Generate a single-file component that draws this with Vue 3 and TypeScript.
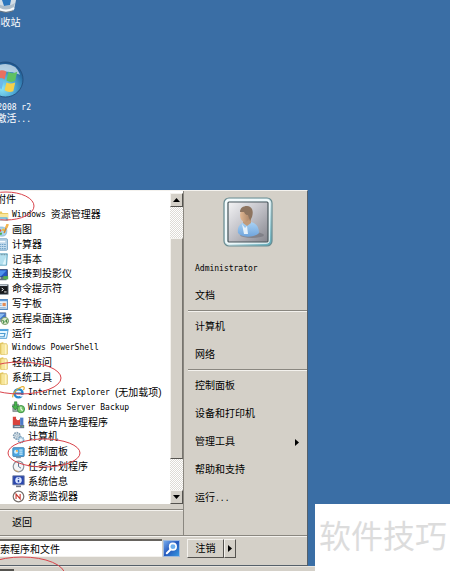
<script setup lang="ts">
interface ProgramItem {
  icon?: string
  latin?: string
  text?: string
  level: number
}

const programs: ProgramItem[] = [
  { text: '附件', level: 0 },
  { icon: 'explorer', latin: 'Windows', text: '资源管理器', level: 1 },
  { icon: 'paint', text: '画图', level: 1 },
  { icon: 'calc', text: '计算器', level: 1 },
  { icon: 'notepad', text: '记事本', level: 1 },
  { icon: 'projector', text: '连接到投影仪', level: 1 },
  { icon: 'cmd', text: '命令提示符', level: 1 },
  { icon: 'wordpad', text: '写字板', level: 1 },
  { icon: 'remote', text: '远程桌面连接', level: 1 },
  { icon: 'run', text: '运行', level: 1 },
  { icon: 'folder', latin: 'Windows PowerShell', level: 1 },
  { icon: 'folder', text: '轻松访问', level: 1 },
  { icon: 'folder', text: '系统工具', level: 1 },
  { icon: 'ie', latin: 'Internet Explorer', text: '(无加载项)', level: 2 },
  { icon: 'backup', latin: 'Windows Server Backup', level: 2 },
  { icon: 'defrag', text: '磁盘碎片整理程序', level: 2 },
  { icon: 'gears', text: '计算机', level: 2 },
  { icon: 'panel', text: '控制面板', level: 2 },
  { icon: 'clock', text: '任务计划程序', level: 2 },
  { icon: 'info', text: '系统信息', level: 2 },
  { icon: 'monitor', text: '资源监视器', level: 2 },
]

const places: { text: string; latin?: string; more?: boolean }[][] = [
  [{ text: '', latin: 'Administrator' }, { text: '文档' }],
  [{ text: '计算机' }, { text: '网络' }],
  [
    { text: '控制面板' },
    { text: '设备和打印机' },
    { text: '管理工具', more: true },
    { text: '帮助和支持' },
    { text: '运行', latin: '...' },
  ],
]
</script>

<template>
  <svg class="sprite" aria-hidden="true">
    <symbol id="i-folder" viewBox="0 0 16 16">
      <path d="M3 2 9 0v14l-6 1z" fill="#e9cf6b" />
      <path d="M6 2h7l1 2v11l-8 1z" fill="#f7e69a" stroke="#d8b955" stroke-width=".8" />
      <path d="M12 3v12" stroke="#fff7cf" stroke-width="1.4" />
    </symbol>
    <symbol id="i-explorer" viewBox="0 0 16 16">
      <path d="M1 3h6l1 2h7v9H1z" fill="#e8c55c" />
      <path d="M1 6h14v6H1z" fill="#f8e79b" />
      <path d="M3 10h11l1 4H2z" fill="#69b5df" />
      <path d="M5 12h7v2H5z" fill="#d8effa" />
    </symbol>
    <symbol id="i-paint" viewBox="0 0 16 16">
      <path d="M1 9C1 4 5 3 9 4s5 3 4 7-4 4-7 4-5-2-5-6z" fill="#a8d4ee" stroke="#6da5c8" stroke-width=".7" />
      <circle cx="5" cy="8" r="1.6" fill="#e5562f" />
      <circle cx="9" cy="7" r="1.5" fill="#f3bf35" />
      <circle cx="6" cy="12" r="1.4" fill="#4baf4b" />
      <path d="m14 1-4 10" stroke="#d58b2e" stroke-width="2" />
      <path d="m14.5 0-2 5" stroke="#f4b44f" stroke-width="3" />
    </symbol>
    <symbol id="i-calc" viewBox="0 0 16 16">
      <rect x="2" y="1" width="12" height="14" rx="1" fill="#c5ddef" stroke="#5e93ba" />
      <path d="M4 3h8v3H4z" fill="#f5fbff" stroke="#8bb3cf" stroke-width=".6" />
      <path d="M4 8h8M4 10.500h8M4 13h8" stroke="#6ea2c8" stroke-width="1.4" stroke-dasharray="2 1" />
    </symbol>
    <symbol id="i-notepad" viewBox="0 0 16 16">
      <path d="M3 1h11l-1 14H1z" fill="#b4e0ef" stroke="#529bb8" />
      <path d="M4 2h9" stroke="#6f8d99" stroke-width="1.500" stroke-dasharray="1 1" />
      <path d="m12 5-4 9h4z" fill="#dff5fb" />
    </symbol>
    <symbol id="i-projector" viewBox="0 0 16 16">
      <path d="M1 2h13v9H1z" fill="#2458c4" stroke="#22365d" />
      <path d="m2 3 11 0-7 7H2z" fill="#4e93ec" />
      <path d="M6 11h4v2h3v2H3v-2h3z" fill="#607080" />
      <path d="M9 10h6v4H9z" fill="#57af53" />
    </symbol>
    <symbol id="i-cmd" viewBox="0 0 16 16">
      <path d="M0 2h15v12H0z" fill="#17191d" stroke="#8995a0" />
      <path d="M1 3h13" stroke="#c5ced7" stroke-width="1.5" />
      <path d="m7 6 2 2-2 2M10 11h3" fill="none" stroke="#fff" stroke-width="1.2" />
    </symbol>
    <symbol id="i-wordpad" viewBox="0 0 16 16">
      <path d="M2 2h12v12H2z" fill="#e9f5fe" stroke="#5488bd" stroke-width="1.3" />
      <path d="M2 2h12v2H2z" fill="#5e9bda" />
      <path d="M8 6h4v4H8z" fill="#e28b55" />
      <path d="M4 7h3M4 9h3M4 12h8" stroke="#6d9bc5" />
    </symbol>
    <symbol id="i-remote" viewBox="0 0 16 16">
      <path d="M2 1h10v8H2z" fill="#3e74cc" stroke="#596f91" />
      <path d="m3 2h8l-6 6H3z" fill="#8bbcf0" />
      <path d="M5 10h4v2H5z" fill="#7c8894" />
      <circle cx="11" cy="11" r="4.500" fill="#d9e9c8" stroke="#6c8f5c" />
      <path d="m8 10 2 2-1 2M14 9l-2 2 2 2" fill="none" stroke="#338038" stroke-width="1.3" />
    </symbol>
    <symbol id="i-run" viewBox="0 0 16 16">
      <path d="M2 3h13l-2 11H0z" fill="#e6f6ff" stroke="#3f92cc" />
      <path d="M2 3h13l-.5 2H2z" fill="#4ba1df" />
      <path d="M5 8h6l-1 4H4" fill="none" stroke="#4c9bd1" stroke-width="1.4" />
    </symbol>
    <symbol id="i-ie" viewBox="0 0 16 16">
      <circle cx="8" cy="9" r="5" fill="none" stroke="#278bd2" stroke-width="3" />
      <path d="M4 9h9" stroke="#1c6db7" stroke-width="2" />
      <path d="M10 11h5v2h-5z" fill="#fff" />
      <path d="M1 14C0 10 6 3 12 1c3-1 4 1 2 4" fill="none" stroke="#e5ad2e" stroke-width="1.4" />
    </symbol>
    <symbol id="i-backup" viewBox="0 0 16 16">
      <path d="M1 4h7v9H1z" fill="#9ba7a7" stroke="#647575" stroke-width=".7" />
      <path d="M3 1v5H0l4 5 4-5H6V1z" fill="#45b44c" stroke="#24782c" stroke-width=".7" />
      <circle cx="11" cy="10" r="4.500" fill="#74c76a" stroke="#31863c" />
      <path d="M11 7v3l2 2" fill="none" stroke="#f2fff0" stroke-width="1.4" />
    </symbol>
    <symbol id="i-defrag" viewBox="0 0 16 16">
      <path d="M1 1h4v10H1zM5 4h5v7H5z" fill="#d8433d" />
      <path d="M10 2h4v9h-4z" fill="#4b79c7" />
      <path d="M6 1h3v4H6z" fill="#fff" />
      <path d="M1 11h14v4H1z" fill="#65758a" />
      <path d="M3 13h7" stroke="#e0e8f0" />
      <path d="M12 13h2" stroke="#69d164" />
    </symbol>
    <symbol id="i-gears" viewBox="0 0 16 16">
      <circle cx="6" cy="6" r="4" fill="#d9e4ec" stroke="#809cb2" stroke-width="2" stroke-dasharray="2 1" />
      <circle cx="6" cy="6" r="1.500" fill="#fff" stroke="#8ba5b7" />
      <circle cx="11" cy="11" r="3.500" fill="#c8dfee" stroke="#6d9cbd" stroke-width="1.6" stroke-dasharray="1.600 1" />
      <circle cx="11" cy="11" r="1.200" fill="#fff" />
    </symbol>
    <symbol id="i-panel" viewBox="0 0 16 16">
      <rect x="1" y="2" width="14" height="11" rx="1" fill="#4ba5df" stroke="#397aad" />
      <circle cx="5" cy="7" r="2.500" fill="#cceeff" />
      <path d="M5 7V4.500A2.500 2.500 0 0 1 7.500 7z" fill="#f2ad45" />
      <path d="M9 5h4M9 7.500h4M9 10h4" stroke="#e9faff" stroke-width="1.2" />
      <path d="M5 14h6" stroke="#7895a9" stroke-width="2" />
    </symbol>
    <symbol id="i-clock" viewBox="0 0 16 16">
      <circle cx="8" cy="8" r="6.500" fill="#f4f5f6" stroke="#8d969e" stroke-width="1.5" />
      <path d="M8 3v5l3 2" fill="none" stroke="#577391" stroke-width="1.2" />
      <path d="M3 12a6 6 0 0 0 5 2" fill="none" stroke="#d4a15a" />
    </symbol>
    <symbol id="i-info" viewBox="0 0 16 16">
      <path d="M1 1h14v11H1z" fill="#2946ae" stroke="#69769b" />
      <circle cx="8" cy="6.500" r="4" fill="#d8e4ff" />
      <path d="M8 6v3M8 3.500v1.200" stroke="#2445a9" stroke-width="1.8" />
      <path d="M5 14h6" stroke="#6d7382" stroke-width="2" />
    </symbol>
    <symbol id="i-monitor" viewBox="0 0 16 16">
      <circle cx="8" cy="8" r="6.500" fill="#fff" stroke="#77716e" stroke-width="1.5" />
      <path d="M5 11V5l5 6V5" fill="none" stroke="#c83b32" stroke-width="1.4" />
    </symbol>
  </svg>

  <main class="desktop">
    <section class="shortcuts">
      <a href="#" class="shortcut">
        <svg class="bin" viewBox="0 0 24 14" aria-hidden="true">
          <path d="M2 0h20l-2 10q-8 5-16 0z" fill="#d3dde5" />
          <path d="M3 3q9 6 18 0l-2 6q-7 5-14 0z" fill="#aebdc9" />
          <path d="M8 0h9l-1 5-6 1z" fill="#2d77bd" />
          <path d="M4 8q8 5 16 0" fill="none" stroke="#f8fafb" stroke-width="2" />
          <path d="M5 11q7 3 14 0" fill="none" stroke="#627180" />
        </svg>
        <span>回收站</span>
      </a>
      <a href="#" class="shortcut">
        <svg class="orb" viewBox="0 0 38 38" aria-hidden="true">
          <defs>
            <radialGradient id="orb-fill" cx=".4" cy=".75" r=".75">
              <stop offset="0" stop-color="#8be4f5" />
              <stop offset=".5" stop-color="#4ba6d3" />
              <stop offset="1" stop-color="#1c558f" />
            </radialGradient>
          </defs>
          <circle cx="19" cy="19" r="18" fill="url(#orb-fill)" stroke="#245181" />
          <path d="M4 13Q8 3 19 3t15 11q-14-6-30-1z" fill="#dbeaf3" opacity=".75" />
          <path d="M11 11q4-3 9 0l-2 8q-4-3-9 0z" fill="#e8705f" />
          <path d="M22 11q4 3 9 0l-2 9q-4 3-9 0z" fill="#5fc163" />
          <path d="M8 21q5-3 9 0l-2 8q-4-3-9-1z" fill="#6cb9ea" />
          <path d="M20 22q4 2 9 0l-2 9q-5 2-9-1z" fill="#f4d04a" />
        </svg>
        <span class="caption"><span class="latin">2008 r2</span><br />激活<span class="latin">...</span></span>
      </a>
    </section>

    <section class="menu">
      <div class="columns">
        <div class="left">
          <div class="programs">
            <ul class="list">
              <li v-for="(item, i) in programs" :key="i">
                <a href="#" :class="['program', 'level-' + item.level]">
                  <svg v-if="item.icon" class="icon" aria-hidden="true"><use :href="'#i-' + item.icon" /></svg>
                  <span class="name">
                    <span v-if="item.latin" class="latin">{{ item.latin }}</span>
                    <span v-if="item.text">{{ item.text }}</span>
                  </span>
                </a>
              </li>
            </ul>
            <div class="scroll">
              <button type="button" class="step" aria-label="向上滚动">
                <svg viewBox="0 0 7 4" aria-hidden="true"><path d="M0 4 3.500 0 7 4z" /></svg>
              </button>
              <div class="track"><div class="thumb"></div></div>
              <button type="button" class="step" aria-label="向下滚动">
                <svg viewBox="0 0 7 4" aria-hidden="true"><path d="M0 0h7L3.500 4z" /></svg>
              </button>
            </div>
          </div>
          <button type="button" class="back">返回</button>
        </div>

        <nav class="right">
          <svg class="avatar" viewBox="0 0 50 50" aria-hidden="true">
            <defs>
              <linearGradient id="frame" x2="1" y2="1">
                <stop offset="0" stop-color="#eef6f7" />
                <stop offset=".55" stop-color="#d5eaee" />
                <stop offset="1" stop-color="#58a6b5" />
              </linearGradient>
              <linearGradient id="photo" x2="1" y2="1">
                <stop offset="0" stop-color="#f4f4f5" />
                <stop offset=".45" stop-color="#c5c5cb" />
                <stop offset="1" stop-color="#85858d" />
              </linearGradient>
              <linearGradient id="shirt" x2="0" y2="1">
                <stop offset="0" stop-color="#a9d2f4" />
                <stop offset="1" stop-color="#6fa4dc" />
              </linearGradient>
              <linearGradient id="skin">
                <stop offset="0" stop-color="#e2b994" />
                <stop offset="1" stop-color="#a98365" />
              </linearGradient>
            </defs>
            <rect x="1" y="1" width="48" height="48" rx="5" fill="url(#frame)" stroke="#688b91" stroke-width="1.2" />
            <rect x="3" y="3" width="43" height="43" rx="3" fill="none" stroke="#f6fdfe" stroke-width="1.5" />
            <rect x="5" y="5" width="40" height="40" rx="1" fill="url(#photo)" stroke="#4a575c" stroke-width="1.2" />
            <ellipse cx="29" cy="38" rx="12" ry="3" fill="#66666e" opacity=".5" />
            <path d="M15 36c-1-6 2-10 7-11h6c5 1 8 5 8 11-5 5-17 5-21 0z" fill="url(#shirt)" />
            <path d="m19 27 3 4 2-2 1 8h-4z" fill="#e6f1fa" />
            <path d="M20 21h8v5l-4 3-4-3z" fill="#c09a7a" />
            <ellipse cx="22" cy="18" rx="5" ry="7" fill="url(#skin)" />
            <path d="M17 15c0-4 3-6 7-6 5 0 7 5 5 11l-2 4-2-6c-3 0-3-2-4-3z" fill="#8d745f" />
          </svg>
          <ul v-for="(group, g) in places" :key="g" class="group">
            <li v-for="place in group" :key="place.text">
              <a href="#" class="place">
                <span>{{ place.text }}<span v-if="place.latin" class="latin">{{ place.latin }}</span></span>
                <svg v-if="place.more" class="more" viewBox="0 0 4 7" aria-hidden="true"><path d="M0 0v7l4-3.500z" /></svg>
              </a>
            </li>
          </ul>
        </nav>
      </div>

      <div class="actions">
        <input class="query" type="text" value="搜索程序和文件" aria-label="搜索程序和文件" />
        <button type="button" class="find" aria-label="搜索">
          <svg viewBox="0 0 16 16" aria-hidden="true">
            <circle cx="9.500" cy="6" r="3.500" fill="#6fb1ee" stroke="#fff" stroke-width="1.700" />
            <path d="m7 9-4 4" stroke="#fff" stroke-width="2.200" stroke-linecap="round" />
          </svg>
        </button>
        <div class="session">
          <button type="button" class="logoff">注销</button>
          <button type="button" class="options" aria-label="更多选项">
            <svg class="more" viewBox="0 0 4 7" aria-hidden="true"><path d="M0 0v7l4-3.500z" /></svg>
          </button>
        </div>
      </div>
    </section>

    <footer class="taskbar"><div class="start"></div></footer>

    <svg class="marks" viewBox="0 0 100 381" aria-hidden="true">
      <ellipse cx="6" cy="16" rx="28" ry="14" />
      <ellipse cx="20" cy="188" rx="41" ry="16" />
      <ellipse cx="44" cy="263" rx="36" ry="14" />
      <ellipse cx="22" cy="385" rx="43" ry="18" />
    </svg>
    <div class="watermark">软件技巧</div>
  </main>
</template>

<style>
body {
  margin: 0;
}
</style>

<style scoped>
* {
  box-sizing: border-box;
}

.sprite {
  position: absolute;
  width: 0;
  height: 0;
}

.desktop {
  position: relative;
  display: flex;
  flex-direction: column;
  min-height: 100vh;
  overflow: hidden;
  background: #3a6ea5;
  color: #000;
  font: 10px/14px "Liberation Sans", "Noto Sans CJK SC", sans-serif;
}

.latin {
  font-family: "DejaVu Sans Mono", monospace;
  font-size: 8px;
}

a {
  color: inherit;
  text-decoration: none;
}

button,
input {
  margin: 0;
  padding: 0;
  border: 0;
  border-radius: 0;
  color: inherit;
  font: inherit;
}

ul {
  margin: 0;
  padding: 0;
  list-style: none;
}

.shortcuts {
  flex: 1;
  display: flex;
  flex-direction: column;
  align-items: flex-start;
  gap: 33px;
  margin-left: -20px;
}

.shortcut {
  display: flex;
  flex-direction: column;
  align-items: center;
  width: 51px;
  color: #fff;
  line-height: 11px;
  gap: 3px;
}

.caption {
  align-self: flex-end;
  text-align: right;
}

.bin {
  width: 24px;
  height: 14px;
}

.orb {
  width: 37px;
  height: 37px;
}

.menu {
  align-self: flex-start;
  width: 318px;
  margin-left: -10px;
  background: #d4d0c8;
  border-top: 1px solid #f4f2ee;
  border-right: 1px solid #55606a;
  border-bottom: 1px solid #55606a;
}

.columns {
  display: grid;
  grid-template-columns: 194px 1fr;
  border-bottom: 1px solid #8a8780;
}

.left {
  display: flex;
  flex-direction: column;
  border-right: 1px solid #8a8780;
}

.programs {
  display: flex;
  height: 313px;
  padding-top: 2px;
  background: #fff;
}

.list {
  flex: 1;
  display: grid;
  grid-auto-rows: 1fr;
  min-width: 0;
}

.program {
  display: flex;
  align-items: center;
  gap: 3px;
  height: 100%;
  padding-left: 6px;
  white-space: nowrap;
}

.name {
  display: flex;
  align-items: center;
  gap: 5px;
}

.level-2 {
  padding-left: 22px;
}

.icon {
  width: 13px;
  height: 13px;
  flex: none;
}

.scroll {
  display: flex;
  flex-direction: column;
  width: 13px;
}

.step {
  display: grid;
  place-items: center;
  height: 14px;
  background: #d4d0c8;
  border: 1px solid;
  border-color: #f4f2ee #55534f #55534f #f4f2ee;
}

.step svg {
  width: 7px;
  height: 4px;
}

.track {
  flex: 1;
  display: flex;
  padding: 31px 0;
  background: repeating-conic-gradient(#fff 0 25%, #dedbd5 0 50%) 0 0 / 2px 2px;
}

.thumb {
  flex: 1;
  background: #d4d0c8;
  border: 1px solid;
  border-color: #f4f2ee #77746e #55534f #f4f2ee;
}

.back {
  flex: 1;
  margin-top: 5px;
  padding-left: 22px;
  text-align: left;
  background: none;
  border-top: 1px solid #8a8780;
  box-shadow: inset 0 1px #f4f2ee;
}

.right {
  display: flex;
  flex-direction: column;
  padding: 6px 0 23px 4px;
}

.avatar {
  align-self: center;
  width: 50px;
  height: 50px;
  margin-bottom: 7px;
}

.group + .group {
  border-top: 1px solid #8a8780;
  box-shadow: inset 0 1px #f4f2ee;
  padding-top: 2px;
}

.place {
  display: flex;
  align-items: center;
  justify-content: space-between;
  height: 28px;
  padding: 0 8px 0 7px;
}

.more {
  width: 4px;
  height: 7px;
}

.actions {
  display: flex;
  align-items: flex-start;
  padding: 3px 0 7px;
  box-shadow: inset 0 1px #f4f2ee;
}

.query {
  width: 172px;
  height: 18px;
  background: #fff;
  border-top: 2px solid #66635e;
  border-bottom: 1px solid #f4f2ee;
}

.find {
  display: grid;
  place-items: center;
  width: 17px;
  height: 17px;
  margin: 1px 7px 0 1px;
  background: linear-gradient(135deg, #75a9eb, #2458bd 50%, #3798df);
  border: 1px solid #9fb9dc;
}

.find svg {
  width: 15px;
  height: 15px;
}

.session {
  display: flex;
  height: 19px;
}

.logoff,
.options {
  background: #d4d0c8;
  border: 1px solid;
  border-color: #f4f2ee #55534f #55534f #f4f2ee;
}

.logoff {
  width: 37px;
}

.options {
  display: grid;
  place-items: center;
  width: 12px;
}

.taskbar {
  height: 5px;
  padding-top: 2px;
  background: #d4d0c8;
  border-top: 1px solid #e8e5df;
}

.start {
  width: 14px;
  height: 2px;
  background: #55534f;
}

.marks {
  position: absolute;
  left: 0;
  bottom: 0;
  width: 100px;
  height: 381px;
  fill: none;
  stroke: #d9434b;
  stroke-width: 1;
  pointer-events: none;
}

.watermark {
  position: absolute;
  right: 0;
  bottom: 0;
  padding: 9px 3px 10px 4px;
  background: #fff;
  color: #dcdcdc;
  font-size: 32px;
  line-height: 48px;
  white-space: nowrap;
}
</style>
